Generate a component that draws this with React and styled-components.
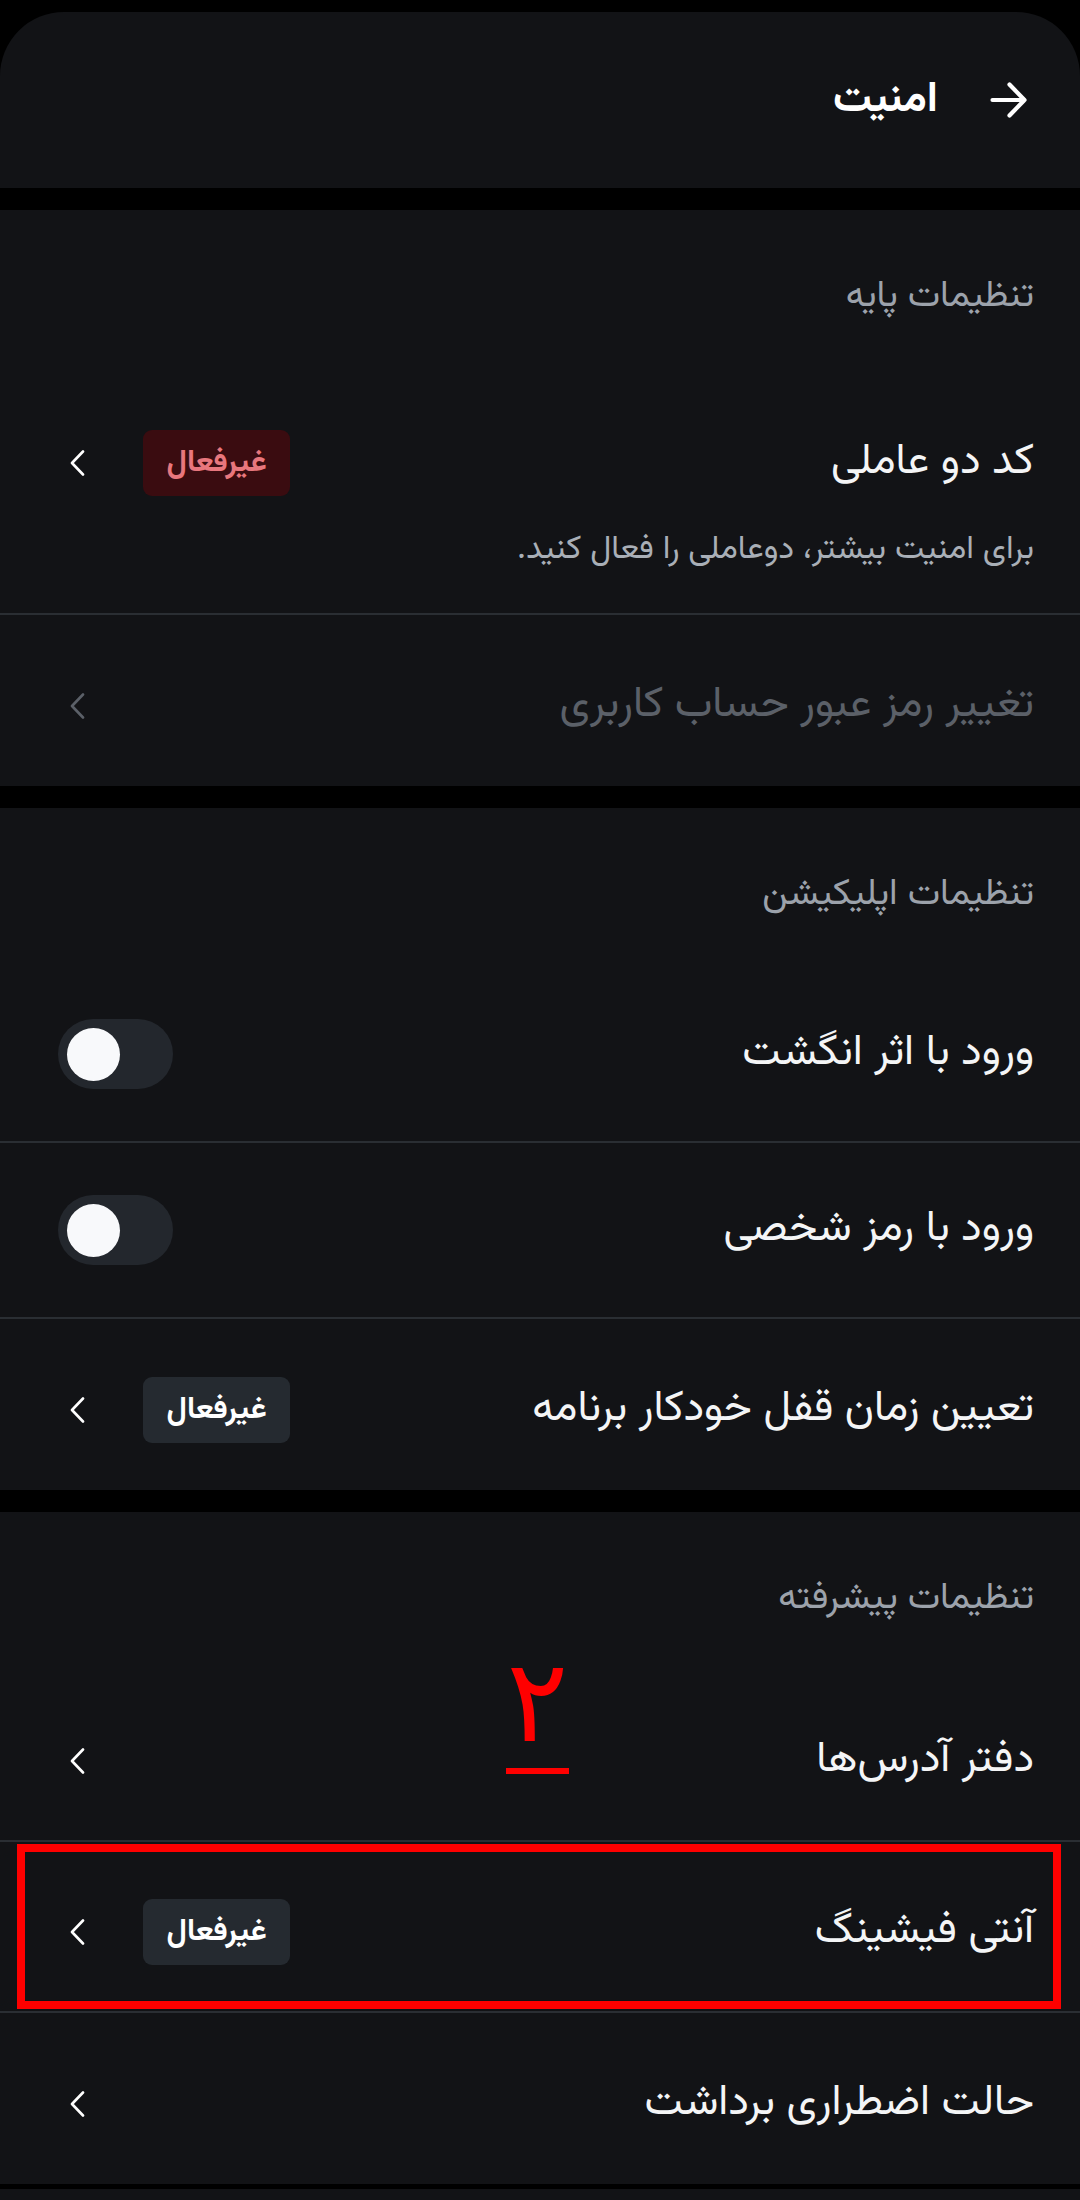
import React from "react";
import styled, { createGlobalStyle } from "styled-components";

const Global = createGlobalStyle`
  html, body { margin: 0; padding: 0; background: #000; }
  body { font-family: "Vazirmatn", "Noto Sans Arabic", "DejaVu Sans", sans-serif; }
  * { box-sizing: border-box; }
`;

const Page = styled.div`
  direction: rtl;
  background: #000;
  padding-top: 12px;
  min-height: 2200px;
  display: flex;
  flex-direction: column;
  gap: 22px;
`;

const Header = styled.header`
  height: 176px;
  background: #121316;
  border-radius: 64px 64px 0 0;
  display: flex;
  align-items: center;
  gap: 52px;
  padding: 0 53px;
`;

const HeaderTitle = styled.h1`
  margin: 0;
  font-size: 43px;
  font-weight: 700;
  color: #ffffff;
`;

const Section = styled.section`
  background: #121316;
  display: flex;
  flex-direction: column;
`;

const SectionTitle = styled.h2`
  margin: 0;
  padding: 69px 46px 54px 46px;
  line-height: 36px;
  font-size: 37px;
  font-weight: 400;
  color: #9ca2ab;
`;

const Row = styled.div`
  position: relative;
  display: flex;
  flex-direction: column;
  justify-content: center;
  min-height: ${(p) => (p.$tall ? "176px" : "171px")};
  padding: ${(p) =>
    p.$withSub ? "61px 46px 41px 58px" : p.$tall ? "0 46px 0 58px" : "11px 46px 0 58px"};
  border-bottom: ${(p) => (p.$last ? "none" : "2px solid #2a2e33")};
`;

const RowMain = styled.div`
  display: flex;
  align-items: center;
  justify-content: space-between;
  min-height: 66px;
`;

const RowTitle = styled.div`
  font-size: 43px;
  line-height: 56px;
  color: ${(p) => (p.$disabled ? "#5b6068" : "#f4f5f6")};
`;

const Subtitle = styled.div`
  margin-top: 32px;
  font-size: 33px;
  line-height: 44px;
  color: #a9afb7;
`;

const Trailing = styled.div`
  display: flex;
  align-items: center;
  gap: 47px;
`;

const Badge = styled.span`
  width: 147px;
  height: 66px;
  border-radius: 9px;
  display: flex;
  align-items: center;
  justify-content: center;
  font-size: 31px;
  font-weight: 700;
  background: ${(p) => (p.$tone === "danger" ? "#3a0c10" : "#252a30")};
  color: ${(p) => (p.$tone === "danger" ? "#e8777d" : "#ffffff")};
`;

const ChevronBox = styled.span`
  width: 38px;
  display: flex;
  align-items: center;
  justify-content: center;
  color: ${(p) => (p.$disabled ? "#5b6068" : "#ffffff")};
`;

const Toggle = styled.span`
  width: 115px;
  height: 70px;
  border-radius: 35px;
  background: #23272d;
  display: flex;
  align-items: center;
  justify-content: flex-end;
  padding: 0 9px;
`;

const Knob = styled.span`
  width: 53px;
  height: 53px;
  border-radius: 50%;
  background: #f8f9fb;
`;

const Highlight = styled.span`
  position: absolute;
  left: 17px;
  right: 19px;
  top: 2px;
  bottom: 2px;
  border: 8px solid #ff0000;
  pointer-events: none;
`;

const Mark = styled.span`
  position: absolute;
  left: 506px;
  top: -27px;
  display: flex;
  flex-direction: column;
  align-items: center;
  color: #ff0000;
  font-family: "DejaVu Sans", sans-serif;
  font-size: 115px;
  line-height: 115px;
  pointer-events: none;
`;

const MarkLine = styled.span`
  width: 63px;
  height: 6px;
  margin-top: 9px;
  background: #ff0000;
`;

const Tail = styled.div`
  flex: 1;
  background: #121316;
  margin-top: -17px;
`;

const Chevron = () => (
  <svg width="16" height="26" viewBox="0 0 16 26" fill="none">
    <path d="M14 1.5 L3 13 L14 24.5" stroke="currentColor" strokeWidth="2.6" strokeLinecap="round" strokeLinejoin="round" />
  </svg>
);

const ArrowRight = () => (
  <svg width="37" height="36" viewBox="0 0 37 36" fill="none">
    <path d="M2.5 18 H34.5 M19.5 2.5 L34.5 18 L19.5 33.5" stroke="#fff" strokeWidth="4.2" strokeLinecap="round" strokeLinejoin="round" />
  </svg>
);

function NavRow({ title, badge, tone, disabled, last, sub, children }) {
  return (
    <Row $last={last} $withSub={!!sub}>
      <RowMain>
        <RowTitle $disabled={disabled}>{title}</RowTitle>
        <Trailing>
          {badge && <Badge $tone={tone}>{badge}</Badge>}
          <ChevronBox $disabled={disabled}>
            <Chevron />
          </ChevronBox>
        </Trailing>
      </RowMain>
      {sub && <Subtitle>{sub}</Subtitle>}
      {children}
    </Row>
  );
}

function ToggleRow({ title, last }) {
  return (
    <Row $last={last} $tall>
      <RowMain>
        <RowTitle>{title}</RowTitle>
        <Toggle>
          <Knob />
        </Toggle>
      </RowMain>
    </Row>
  );
}

export default function App() {
  return (
    <>
      <Global />
      <Page dir="rtl">
        <Header>
          <ArrowRight />
          <HeaderTitle>امنیت</HeaderTitle>
        </Header>

        <Section>
          <SectionTitle>تنظیمات پایه</SectionTitle>
          <NavRow
            title="کد دو عاملی"
            badge="غیرفعال"
            tone="danger"
            sub="برای امنیت بیشتر، دوعاملی را فعال کنید."
          />
          <NavRow title="تغییر رمز عبور حساب کاربری" disabled last />
        </Section>

        <Section>
          <SectionTitle>تنظیمات اپلیکیشن</SectionTitle>
          <ToggleRow title="ورود با اثر انگشت" />
          <ToggleRow title="ورود با رمز شخصی" />
          <NavRow title="تعیین زمان قفل خودکار برنامه" badge="غیرفعال" last />
        </Section>

        <Section>
          <SectionTitle>تنظیمات پیشرفته</SectionTitle>
          <NavRow title="دفتر آدرس‌ها">
            <Mark>
              ۲
              <MarkLine />
            </Mark>
          </NavRow>
          <NavRow title="آنتی فیشینگ" badge="غیرفعال">
            <Highlight />
          </NavRow>
          <NavRow title="حالت اضطراری برداشت" last />
        </Section>
        <Tail />
      </Page>
    </>
  );
}
